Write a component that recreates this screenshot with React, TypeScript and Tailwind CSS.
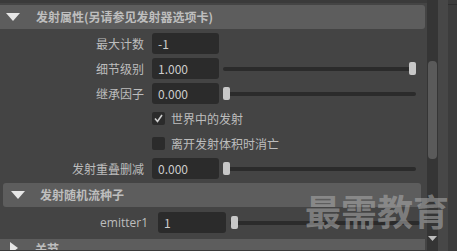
import React from "react";

const font = { fontFamily: '"Noto Sans CJK SC", "Noto Sans", sans-serif' };

function Slider({ pos, width = 193 }: { pos: number; width?: number }) {
  return (
    <div className="relative h-[13px]" style={{ width }}>
      <div className="absolute left-0 right-0 top-[5px] h-[4px] rounded-full bg-[#2b2b2b]" />
      <div
        className="absolute top-0 h-[13px] w-[7px] rounded-[2px] bg-[#c8c8c8]"
        style={{ left: pos }}
      />
    </div>
  );
}

function Row({ label, value, slider }: { label: string; value: string; slider?: number }) {
  return (
    <div className="flex h-[25px] items-center">
      <div className="w-[144px] pr-0 text-right text-[12px] text-[#bdbdbd]">{label}</div>
      <div className="ml-[8px] flex h-[21px] w-[67px] items-center rounded-[3px] bg-[#2b2b2b] pl-[6px] text-[12px] text-[#cdcdcd]">
        {value}
      </div>
      {slider !== undefined && (
        <div className="ml-[4px]">
          <Slider pos={slider} />
        </div>
      )}
    </div>
  );
}

function Check({ label, checked }: { label: string; checked?: boolean }) {
  return (
    <div className="flex h-[25px] items-center">
      <div className="ml-[152px] flex h-[13px] w-[13px] items-center justify-center rounded-[2px] bg-[#2b2b2b]">
        {checked && (
          <svg width="11" height="11" viewBox="0 0 11 11">
            <path d="M2 5.5 L4.5 8.5 L9 2" stroke="#d0d0d0" strokeWidth="1.6" fill="none" />
          </svg>
        )}
      </div>
      <div className="ml-[6px] text-[12px] text-[#bdbdbd]">{label}</div>
    </div>
  );
}

export default function App() {
  return (
    <div className="relative flex h-[251px] w-[457px] overflow-hidden bg-[#444444]" style={font}>
      <div className="flex w-[427px] flex-col">
        <div className="h-[3px] w-full bg-[#3a3a3a]" />
        <div className="mt-[2px] flex h-[24px] w-[425px] items-center rounded-r-[3px] bg-[#5d5d5d]">
          <svg width="14" height="8" viewBox="0 0 14 8" className="ml-[6px]">
            <path d="M0 0 L14 0 L7 8 Z" fill="#e6e6e6" />
          </svg>
          <span className="ml-[16px] text-[12px] font-bold text-[#bebebe]">发射属性(另请参见发射器选项卡)</span>
        </div>
        <div className="mt-[2px] flex flex-col">
          <Row label="最大计数" value="-1" />
          <Row label="细节级别" value="1.000" slider={186} />
          <Row label="继承因子" value="0.000" slider={0} />
          <Check label="世界中的发射" checked />
          <Check label="离开发射体积时消亡" />
          <Row label="发射重叠删减" value="0.000" slider={0} />
        </div>
        <div className="ml-[3px] mt-[2px] flex h-[24px] w-[418px] items-center rounded-[3px] bg-[#5d5d5d]">
          <svg width="14" height="8" viewBox="0 0 14 8" className="ml-[8px]">
            <path d="M0 0 L14 0 L7 8 Z" fill="#e6e6e6" />
          </svg>
          <span className="ml-[15px] text-[12px] font-bold text-[#bebebe]">发射随机流种子</span>
        </div>
        <div className="mt-[4px] flex h-[23px] items-center">
          <div className="w-[148px] text-right text-[12px] text-[#bdbdbd]" style={{ fontFamily: '"Open Sans", "Noto Sans", sans-serif' }}>emitter1</div>
          <div className="ml-[10px] flex h-[21px] w-[68px] items-center rounded-[3px] bg-[#2b2b2b] pl-[6px] text-[12px] text-[#cdcdcd]">1</div>
          <div className="ml-[4px]">
            <Slider pos={1} width={190} />
          </div>
        </div>
        <div className="mt-[5px] flex h-[11px] w-[425px] items-start overflow-hidden bg-[#5d5d5d]">
          <svg width="8" height="12" viewBox="0 0 8 12" className="ml-[10px] mt-[3px]">
            <path d="M0 0 L8 6 L0 12 Z" fill="#e6e6e6" />
          </svg>
          <span className="ml-[17px] mt-[4px] text-[12px] font-bold leading-none text-[#bebebe]">关节</span>
        </div>
        <div className="flex-1 bg-[#3a3a3a]" />
      </div>
      <div className="relative w-[11px] bg-[#353535]">
        <div className="absolute left-[1px] top-[61px] h-[98px] w-[9px] rounded-[4px] bg-[#5a5a5a]" />
        <svg width="9" height="5" viewBox="0 0 9 5" className="absolute left-[1px] top-[236px]">
          <path d="M0 0 L9 0 L4.5 5 Z" fill="#bdbdbd" />
        </svg>
      </div>
      <div className="w-[10px] bg-[#474747]" />
      <div className="flex-1 bg-[#3c3c3c]">
        <div className="mt-[4px] h-[1px] bg-[#2f2f2f]" />
      </div>
      <div
        className="pointer-events-none absolute left-[305px] top-[192px] text-[36px] font-bold leading-none text-[rgba(175,175,175,0.55)]"
        style={{ fontFamily: '"Noto Sans CJK SC", sans-serif' }}
      >
        最需教育
      </div>
    </div>
  );
}
